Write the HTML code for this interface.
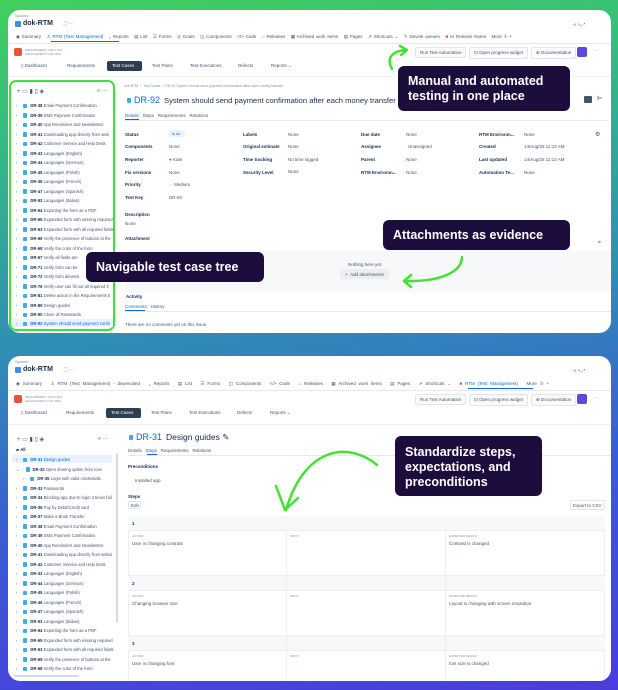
<!DOCTYPE html>
<html><head><meta charset="utf-8"><style>
*{margin:0;padding:0;box-sizing:border-box}
body{width:618px;height:690px;overflow:hidden;font-family:"Liberation Sans",sans-serif;background:linear-gradient(172deg,#40d05c 0%,#33b58a 22%,#2f8fb4 45%,#3a5ad6 70%,#4a3ddc 100%);position:relative}
.card{position:absolute;left:8px;width:603px;background:#fff;border-radius:12px;overflow:hidden}
.a{position:absolute;white-space:nowrap}
.s{font-size:4.5px;color:#44546f}
.g{color:#8590a2}
.b{font-weight:bold;color:#172b4d}
.btn{position:absolute;border:1px solid #e2e4e8;border-radius:2px;font-size:4.5px;color:#44546f;padding:2px 4px;background:#fafbfc}
.co{position:absolute;background:#1d0d3d;border-radius:6px;color:#fff;font-weight:bold;font-family:"Liberation Sans",sans-serif;box-shadow:0 0 0 1px rgba(255,255,255,.08)}
.ti{position:absolute;font-size:4.2px;color:#44546f;white-space:nowrap}
.ti i{display:inline-block;width:4px;height:4.5px;background:#3fa9e9;border-radius:1px;margin:0 3px 0 6px;vertical-align:middle}
.ti b{color:#172b4d}
.hr{position:absolute;height:1px;background:#e6e8eb}
</style></head><body>

<!-- CARD 1 -->
<div class="card" style="top:10px;height:323px">
 <div class="a s g" style="left:7px;top:3px;font-size:4px">Spaces</div>
 <div class="a" style="left:7px;top:11px;width:6px;height:6px;background:#3d8fe0;border-radius:1px"></div>
 <div class="a b" style="left:15px;top:10px;font-size:7px">dok-RTM</div>
 <div class="a s" style="left:56px;top:11px">⛶ ···</div>
 <div class="a s" style="left:565px;top:12px;color:#626f86">⋖ ϟ ⤢</div>
 <div class="a s" style="left:8px;top:24px;word-spacing:0.6px">◉ Summary &nbsp;&nbsp;<span style="color:#0c66e4">♙ RTM (Test Management)</span> &nbsp;&nbsp;⌞ Reports &nbsp;&nbsp;▤ List &nbsp;&nbsp;☰ Forms &nbsp;&nbsp;◎ Goals &nbsp;&nbsp;◫ Components &nbsp;&nbsp;&lt;/&gt; Code &nbsp;&nbsp;⌂ Releases &nbsp;&nbsp;▦ Archived work items &nbsp;&nbsp;▤ Pages &nbsp;&nbsp;⇗ Shortcuts ⌄ &nbsp;&nbsp;✎ Devinti queues &nbsp;&nbsp;<span style="color:#e2483d">■</span> AI Release Notes &nbsp;&nbsp;More ① +</div>
 <div class="a" style="left:43px;top:31px;width:68px;height:1px;background:#0c66e4"></div>
 <div class="hr" style="left:0;top:33px;width:603px"></div>
 <div class="a" style="left:6px;top:38px;width:8px;height:8px;background:#e8513c;border-radius:2px"></div>
 <div class="a g" style="left:17px;top:38px;font-size:3px;line-height:4px">REQUIREMENT AND TEST<br>MANAGEMENT FOR JIRA</div>
 <div class="btn" style="left:407px;top:37px">Run Test Automation</div>
 <div class="btn" style="left:461px;top:37px">⊡ Open progress widget</div>
 <div class="btn" style="left:523px;top:37px">⊕ Documentation</div>
 <div class="a" style="left:569px;top:37px;width:10px;height:10px;background:#5b4bd6;border-radius:2px"></div>
 <div class="a s" style="left:585px;top:38px">···</div>
 <div class="a s" style="left:13px;top:53px">▯ Dashboard</div>
 <div class="a s" style="left:59px;top:53px">Requirements</div>
 <div class="a" style="left:99px;top:51px;width:35px;height:10px;background:#2c3e50;border-radius:2px"></div>
 <div class="a s" style="left:104px;top:53px;color:#fff">Test Cases</div>
 <div class="a s" style="left:144px;top:53px">Test Plans</div>
 <div class="a s" style="left:182px;top:53px">Test Executions</div>
 <div class="a s" style="left:230px;top:53px">Defects</div>
 <div class="a s" style="left:263px;top:53px">Reports ⌄</div>
 <div class="hr" style="left:0;top:66px;width:603px;background:#f0f1f3"></div>

 <!-- tree panel -->
 <div class="a" style="left:1px;top:70px;width:106px;height:251px;border:2.5px solid #3be23b;border-radius:7px"></div>
 <div class="a s" style="left:9px;top:78px;font-size:6px;color:#44546f">+ ▭ ▮ ▯ ◈</div>
 <div class="a s" style="left:89px;top:78px;font-size:5.5px">⌕ ···</div>
 <div class="ti" style="left:8px;top:93px">›<i></i><b>DR-38</b> Email Payment Confirmation</div>
 <div class="ti" style="left:8px;top:102.5px">›<i></i><b>DR-39</b> SMS Payment Confirmation</div>
 <div class="ti" style="left:8px;top:112px">›<i></i><b>DR-40</b> App Reminders and Newsletters</div>
 <div class="ti" style="left:8px;top:121.5px;width:98px;overflow:hidden">›<i></i><b>DR-41</b> Downloading app directly from web</div>
 <div class="ti" style="left:8px;top:131px">›<i></i><b>DR-42</b> Customer Service and Help Desk</div>
 <div class="ti" style="left:8px;top:140.5px">›<i></i><b>DR-43</b> Languages (English)</div>
 <div class="ti" style="left:8px;top:150px">›<i></i><b>DR-44</b> Languages (German)</div>
 <div class="ti" style="left:8px;top:159.5px">›<i></i><b>DR-45</b> Languages (Polish)</div>
 <div class="ti" style="left:8px;top:169px">›<i></i><b>DR-46</b> Languages (French)</div>
 <div class="ti" style="left:8px;top:178.5px">›<i></i><b>DR-47</b> Languages (Spanish)</div>
 <div class="ti" style="left:8px;top:188px">›<i></i><b>DR-53</b> Languages (Italian)</div>
 <div class="ti" style="left:8px;top:197.5px">›<i></i><b>DR-64</b> Exporting the form as a PDF</div>
 <div class="ti" style="left:8px;top:207px;width:98px;overflow:hidden">›<i></i><b>DR-65</b> Expanded form with missing required</div>
 <div class="ti" style="left:8px;top:216.5px;width:98px;overflow:hidden">›<i></i><b>DR-63</b> Expanded form with all required fields</div>
 <div class="ti" style="left:8px;top:226px;width:98px;overflow:hidden">›<i></i><b>DR-69</b> Verify the presence of buttons at the</div>
 <div class="ti" style="left:8px;top:235.5px">›<i></i><b>DR-68</b> Verify the color of the form</div>
 <div class="ti" style="left:8px;top:245px">›<i></i><b>DR-67</b> Verify all fields are</div>
 <div class="ti" style="left:8px;top:254.5px">›<i></i><b>DR-71</b> Verify form can be</div>
 <div class="ti" style="left:8px;top:264px">›<i></i><b>DR-72</b> Verify form dimensi</div>
 <div class="ti" style="left:8px;top:273.5px;width:98px;overflow:hidden">›<i></i><b>DR-76</b> Verify user can fill out all required fi</div>
 <div class="ti" style="left:8px;top:283px;width:98px;overflow:hidden">›<i></i><b>DR-81</b> Delete action in the Requirements tr</div>
 <div class="ti" style="left:8px;top:292.5px">›<i></i><b>DR-89</b> Design guides</div>
 <div class="ti" style="left:8px;top:302px">›<i></i><b>DR-90</b> Clone of Passwords</div>
 <div class="a" style="left:4px;top:309px;width:101px;height:8px;background:#e9f2ff"></div>
 <div class="ti" style="left:8px;top:311px;color:#0c66e4;width:98px;overflow:hidden">›<i></i><b style="color:#0c66e4">DR-92</b> System should send payment confir</div>

 <!-- content -->
 <div class="a g" style="left:116px;top:74px;font-size:3.5px">dok-RTM &nbsp;/&nbsp; Test Cases &nbsp;/&nbsp; DR-92 System should send payment confirmation after each money transfer</div>
 <div class="a" style="left:119px;top:88px;width:4px;height:5px;background:#3fa9e9;border-radius:1px"></div>
 <div class="a" style="left:126px;top:85px;font-size:9px;color:#0c66e4">DR-92</div>
 <div class="a" style="left:156px;top:86px;font-size:7.6px;color:#172b4d">System should send payment confirmation after each money transfer ✎</div>
 <div class="a" style="left:576px;top:86px;width:8px;height:7px;background:#44546f;border-radius:1px"></div>
 <div class="a s" style="left:589px;top:85px;font-size:6px">⊫</div>
 <div class="a s" style="left:117px;top:103px"><span style="color:#0c66e4">Details</span> &nbsp;&nbsp;Steps &nbsp;&nbsp;Requirements &nbsp;&nbsp;Relations</div>
 <div class="a" style="left:117px;top:109px;width:14px;height:1px;background:#0c66e4"></div>
 <div class="hr" style="left:117px;top:110px;width:484px"></div>

 <div class="a s b" style="left:117px;top:122px">Status</div><div class="a" style="left:161px;top:120px;width:16px;height:7px;background:#e9f2ff;border-radius:2px"></div><div class="a s" style="left:164px;top:122px;color:#0c66e4;font-size:3.5px">to do</div>
 <div class="a s b" style="left:117px;top:134px">Components</div><div class="a s" style="left:161px;top:134px">None</div>
 <div class="a s b" style="left:117px;top:147px">Reporter</div><div class="a s" style="left:161px;top:147px"><span style="color:#1d7afc">●</span> Kate</div>
 <div class="a s b" style="left:117px;top:160px">Fix versions</div><div class="a s" style="left:161px;top:160px">None</div>
 <div class="a s b" style="left:117px;top:172px">Priority</div><div class="a s" style="left:161px;top:172px"><span style="color:#f5a623">=</span> &nbsp;Medium</div>
 <div class="a s b" style="left:117px;top:185px">Test Key</div><div class="a s" style="left:161px;top:185px">DR-92</div>
 <div class="a s b" style="left:235px;top:122px">Labels</div><div class="a s" style="left:280px;top:122px">None</div>
 <div class="a s b" style="left:235px;top:134px">Original estimate</div><div class="a s" style="left:280px;top:134px">None</div>
 <div class="a s b" style="left:235px;top:147px">Time tracking</div><div class="a s" style="left:280px;top:147px">No time logged</div>
 <div class="a s b" style="left:235px;top:160px">Security Level</div><div class="a s" style="left:280px;top:159px">None</div>
 <div class="a s b" style="left:353px;top:122px">Due date</div><div class="a s" style="left:398px;top:122px">None</div>
 <div class="a s b" style="left:353px;top:134px">Assignee</div><div class="a s" style="left:400px;top:134px">Unassigned</div>
 <div class="a s b" style="left:353px;top:147px">Parent</div><div class="a s" style="left:398px;top:147px">None</div>
 <div class="a s b" style="left:353px;top:160px">RTM Environm...</div><div class="a s" style="left:398px;top:160px">None</div>
 <div class="a s b" style="left:471px;top:122px">RTM Environm...</div><div class="a s" style="left:516px;top:122px">None</div>
 <div class="a s b" style="left:471px;top:134px">Created</div><div class="a s" style="left:516px;top:134px">14/Aug/25 11:12 AM</div>
 <div class="a s b" style="left:471px;top:147px">Last updated</div><div class="a s" style="left:516px;top:147px">14/Aug/25 11:12 AM</div>
 <div class="a s b" style="left:471px;top:160px">Automation Te...</div><div class="a s" style="left:516px;top:160px">None</div>
 <div class="a s" style="left:587px;top:121px;font-size:6px">⚙</div>
 <div class="a s b" style="left:117px;top:202px">Description</div>
 <div class="a s" style="left:117px;top:211px">None</div>
 <div class="a s b" style="left:117px;top:226px">Attachment</div>
 <div class="a s" style="left:590px;top:229px">⌀</div>
 <div class="a" style="left:117px;top:240px;width:486px;height:42px;background:#f7f8f9"></div>
 <div class="a s" style="left:340px;top:252px">Nothing here yet.</div>
 <div class="a" style="left:332px;top:259px;width:49px;height:10px;background:#eceef0;border-radius:2px"></div>
 <div class="a s" style="left:337px;top:262px">+ &nbsp;Add attachments</div>
 <div class="a s b" style="left:118px;top:284px">Activity</div>
 <div class="a s" style="left:117px;top:294px"><span style="color:#0c66e4">Comments</span> &nbsp;&nbsp;History</div>
 <div class="a" style="left:117px;top:300px;width:20px;height:1px;background:#0c66e4"></div>
 <div class="hr" style="left:117px;top:301px;width:486px"></div>
 <div class="a s" style="left:117px;top:312px">There are no comments yet on this issue.</div>
</div>

<!-- CARD 2 -->
<div class="card" style="top:356px;height:325px">
 <div class="a s g" style="left:7px;top:3px;font-size:4px">Spaces</div>
 <div class="a" style="left:7px;top:11px;width:6px;height:6px;background:#3d8fe0;border-radius:1px"></div>
 <div class="a b" style="left:15px;top:10px;font-size:7px">dok-RTM</div>
 <div class="a s" style="left:56px;top:11px">⛶ ···</div>
 <div class="a s" style="left:565px;top:12px;color:#626f86">⋖ ϟ ⤢</div>
 <div class="a s" style="left:8px;top:25px;word-spacing:1.6px">◉ Summary &nbsp;&nbsp;♙ RTM (Test Management) - deprecated &nbsp;&nbsp;⌞ Reports &nbsp;&nbsp;▤ List &nbsp;&nbsp;☰ Forms &nbsp;&nbsp;◫ Components &nbsp;&nbsp;&lt;/&gt; Code &nbsp;&nbsp;⌂ Releases &nbsp;&nbsp;▦ Archived work items &nbsp;&nbsp;▤ Pages &nbsp;&nbsp;⇗ Shortcuts ⌄ &nbsp;&nbsp;<span style="color:#0c66e4"><span style="color:#e2483d">■</span> RTM (Test Management)</span> &nbsp;&nbsp;More ② +</div>
 <div class="a" style="left:460px;top:32px;width:65px;height:1px;background:#0c66e4"></div>
 <div class="hr" style="left:0;top:34px;width:603px"></div>
 <div class="a" style="left:6px;top:39px;width:8px;height:8px;background:#e8513c;border-radius:2px"></div>
 <div class="a g" style="left:17px;top:39px;font-size:3px;line-height:4px">REQUIREMENT AND TEST<br>MANAGEMENT FOR JIRA</div>
 <div class="btn" style="left:407px;top:38px">Run Test Automation</div>
 <div class="btn" style="left:461px;top:38px">⊡ Open progress widget</div>
 <div class="btn" style="left:523px;top:38px">⊕ Documentation</div>
 <div class="a" style="left:569px;top:38px;width:10px;height:10px;background:#5b4bd6;border-radius:2px"></div>
 <div class="a s" style="left:585px;top:39px">···</div>
 <div class="a s" style="left:13px;top:54px">▯ Dashboard</div>
 <div class="a s" style="left:58px;top:54px">Requirements</div>
 <div class="a" style="left:98px;top:52px;width:35px;height:10px;background:#2c3e50;border-radius:2px"></div>
 <div class="a s" style="left:103px;top:54px;color:#fff">Test Cases</div>
 <div class="a s" style="left:143px;top:54px">Test Plans</div>
 <div class="a s" style="left:181px;top:54px">Test Executions</div>
 <div class="a s" style="left:229px;top:54px">Defects</div>
 <div class="a s" style="left:262px;top:54px">Reports ⌄</div>
 <div class="hr" style="left:0;top:68px;width:603px;background:#f0f1f3"></div>

 <div class="a s" style="left:9px;top:80px;font-size:6px">+ ▭ ▮ ▯ ◈</div>
 <div class="a s" style="left:90px;top:80px;font-size:5.5px">⌕ ···</div>
 <div class="a" style="left:108px;top:97px;width:2px;height:170px;background:#d5d8dc;border-radius:1px"></div>
 <div class="ti" style="left:8px;top:91px"><b>▰ All</b></div>
 <div class="a" style="left:4px;top:99px;width:100px;height:8px;background:#e9f2ff"></div>
 <div class="ti" style="left:8px;top:101px">›<i></i><b style="color:#0c66e4">DR-31</b> <span style="color:#0c66e4">Design guides</span></div>
 <div class="ti" style="left:8px;top:110.5px">⌄<i></i><b>DR-32</b> Open sharing option from icon</div>
 <div class="ti" style="left:15px;top:120px">›<i></i><b>DR-35</b> Login with valid credentials</div>
 <div class="ti" style="left:8px;top:129.5px">›<i></i><b>DR-33</b> Passwords</div>
 <div class="ti" style="left:8px;top:139px;width:100px;overflow:hidden">›<i></i><b>DR-34</b> Blocking app due to login 3 times fail</div>
 <div class="ti" style="left:8px;top:148.5px">›<i></i><b>DR-36</b> Pay by Debit/Credit card</div>
 <div class="ti" style="left:8px;top:158px">›<i></i><b>DR-37</b> Make a Book Transfer</div>
 <div class="ti" style="left:8px;top:167.5px">›<i></i><b>DR-38</b> Email Payment Confirmation</div>
 <div class="ti" style="left:8px;top:177px">›<i></i><b>DR-39</b> SMS Payment Confirmation</div>
 <div class="ti" style="left:8px;top:186.5px">›<i></i><b>DR-40</b> App Reminders and Newsletters</div>
 <div class="ti" style="left:8px;top:196px;width:100px;overflow:hidden">›<i></i><b>DR-41</b> Downloading app directly from websi</div>
 <div class="ti" style="left:8px;top:205.5px">›<i></i><b>DR-42</b> Customer Service and Help Desk</div>
 <div class="ti" style="left:8px;top:215px">›<i></i><b>DR-43</b> Languages (English)</div>
 <div class="ti" style="left:8px;top:224.5px">›<i></i><b>DR-44</b> Languages (German)</div>
 <div class="ti" style="left:8px;top:234px">›<i></i><b>DR-45</b> Languages (Polish)</div>
 <div class="ti" style="left:8px;top:243.5px">›<i></i><b>DR-46</b> Languages (French)</div>
 <div class="ti" style="left:8px;top:253px">›<i></i><b>DR-47</b> Languages (Spanish)</div>
 <div class="ti" style="left:8px;top:262.5px">›<i></i><b>DR-53</b> Languages (Italian)</div>
 <div class="ti" style="left:8px;top:272px">›<i></i><b>DR-64</b> Exporting the form as a PDF</div>
 <div class="ti" style="left:8px;top:281.5px;width:100px;overflow:hidden">›<i></i><b>DR-65</b> Expanded form with missing required</div>
 <div class="ti" style="left:8px;top:291px;width:100px;overflow:hidden">›<i></i><b>DR-63</b> Expanded form with all required fields</div>
 <div class="ti" style="left:8px;top:300.5px;width:100px;overflow:hidden">›<i></i><b>DR-69</b> Verify the presence of buttons at the</div>
 <div class="ti" style="left:8px;top:310px">›<i></i><b>DR-68</b> Verify the color of the form</div>
 <div class="a" style="left:6px;top:319px;width:65px;height:2px;background:#d5d8dc;border-radius:1px"></div>

 <div class="a" style="left:121px;top:79px;width:4px;height:5px;background:#3fa9e9;border-radius:1px"></div>
 <div class="a" style="left:128px;top:76px;font-size:9px;color:#0c66e4">DR-31</div>
 <div class="a" style="left:158px;top:76px;font-size:8.5px;color:#172b4d">Design guides ✎</div>
 <div class="a s" style="left:120px;top:92px">Details &nbsp;&nbsp;<span style="color:#0c66e4">Steps</span> &nbsp;&nbsp;Requirements &nbsp;&nbsp;Relations</div>
 <div class="a" style="left:139px;top:98px;width:10px;height:1px;background:#0c66e4"></div>
 <div class="hr" style="left:120px;top:99px;width:483px"></div>
 <div class="a s b" style="left:120px;top:108px">Preconditions</div>
 <div class="a s" style="left:127px;top:122px">Installed app</div>
 <div class="a s b" style="left:120px;top:138px">Steps</div>
 <div class="a" style="left:120px;top:145px;width:13px;height:8px;border:1px solid #e2e4e8;border-radius:2px"></div>
 <div class="a s" style="left:123px;top:147px">Edit</div>
 <div class="a" style="left:562px;top:144px;width:35px;height:10px;border:1px solid #e2e4e8;border-radius:2px"></div>
 <div class="a s" style="left:565px;top:147px">Export to CSV</div>

 <div class="a" style="left:120px;top:160px;width:477px;height:165px;background:#f7f8f9"></div>
 <div class="a" style="left:120px;top:174px;width:477px;height:46px;background:#fff;border:1px solid #eceef0"></div>
 <div class="a" style="left:120px;top:234px;width:477px;height:46px;background:#fff;border:1px solid #eceef0"></div>
 <div class="a" style="left:120px;top:294px;width:477px;height:40px;background:#fff;border:1px solid #eceef0"></div>
 <div class="a" style="left:278px;top:174px;width:1px;height:160px;background:#eceef0"></div>
 <div class="a" style="left:437px;top:174px;width:1px;height:160px;background:#eceef0"></div>
 <div class="a s b" style="left:124px;top:165px">1</div>
 <div class="a s b" style="left:124px;top:225px">2</div>
 <div class="a s b" style="left:124px;top:285px">3</div>
 <div class="a g" style="left:124px;top:178px;font-size:3px">ACTION</div><div class="a g" style="left:282px;top:178px;font-size:3px">INPUT</div><div class="a g" style="left:441px;top:178px;font-size:3px">EXPECTED RESULT</div>
 <div class="a g" style="left:124px;top:238px;font-size:3px">ACTION</div><div class="a g" style="left:282px;top:238px;font-size:3px">INPUT</div><div class="a g" style="left:441px;top:238px;font-size:3px">EXPECTED RESULT</div>
 <div class="a g" style="left:124px;top:298px;font-size:3px">ACTION</div><div class="a g" style="left:282px;top:298px;font-size:3px">INPUT</div><div class="a g" style="left:441px;top:298px;font-size:3px">EXPECTED RESULT</div>
 <div class="a s" style="left:124px;top:185px">User is changing contrast</div><div class="a s" style="left:441px;top:185px">Contrast is changed</div>
 <div class="a s" style="left:124px;top:245px">Changing browser size</div><div class="a s" style="left:441px;top:245px">Layout is changing with screen resolution</div>
 <div class="a s" style="left:124px;top:305px">User is changing font</div><div class="a s" style="left:441px;top:305px">font size is changed</div>
</div>

<!-- callouts -->
<div class="co" style="left:398px;top:66px;width:172px;height:45px;font-size:12.5px;line-height:15px;padding:8px 10px">Manual and automated testing in one place</div>
<div class="co" style="left:383px;top:220px;width:187px;height:30px;font-size:12.5px;line-height:15px;padding:8px 10px">Attachments as evidence</div>
<div class="co" style="left:86px;top:252px;width:178px;height:30px;font-size:12.5px;line-height:15px;padding:8px 10px">Navigable test case tree</div>
<div class="co" style="left:395px;top:436px;width:147px;height:60px;font-size:12.5px;line-height:15px;padding:9px 10px">Standardize steps, expectations, and preconditions</div>

<svg width="618" height="690" style="position:absolute;left:0;top:0" fill="none" stroke="#44e034" stroke-width="2.5" stroke-linecap="round" stroke-linejoin="round">
 <path d="M392 69 C386 58 392 51 406 50"/>
 <path d="M400 46 L407 50 L401 55"/>
 <path d="M462 257 C462 272 440 282 405 281"/>
 <path d="M411 275 L404 281 L411 287"/>
 <path d="M377 465 C350 442 305 445 286 510"/>
 <path d="M276 486 L285 510 L298 498"/>
</svg>
</body></html>
